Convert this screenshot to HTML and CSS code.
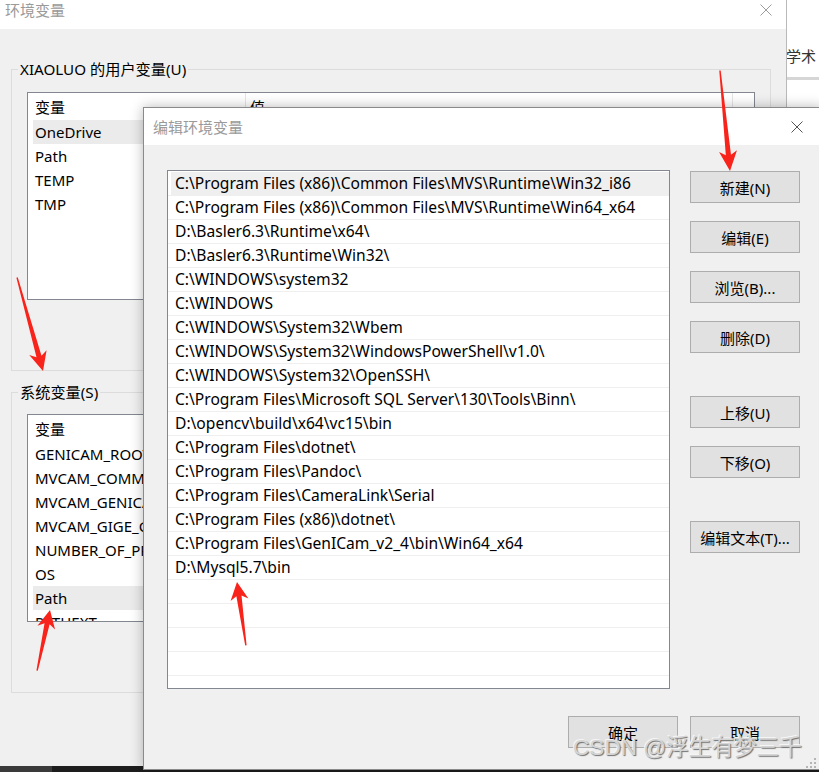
FILE: index.html
```html
<!DOCTYPE html>
<html lang="zh-CN">
<head>
<meta charset="utf-8">
<title>编辑环境变量</title>
<link rel="stylesheet" href="styles.css">
</head>
<body>
<div class="desktop">
  <div class="bgwin">
    <div class="titlebar bg-title">
      <span class="title">环境变量</span>
      <svg class="close" width="12" height="12" viewBox="0 0 12 12"><path d="M0.5 0.5L11.5 11.5M11.5 0.5L0.5 11.5"/></svg>
    </div>
    <div class="bgbody">
      <fieldset class="group">
        <legend>XIAOLUO 的用户变量(U)</legend>
        <div class="listview">
          <div class="lv-head"><span class="col c1">变量</span><span class="col c2">值</span><span class="col c3"></span></div>
          <div class="lv-row sel">OneDrive</div>
          <div class="lv-row">Path</div>
          <div class="lv-row">TEMP</div>
          <div class="lv-row">TMP</div>
        </div>
      </fieldset>
      <fieldset class="group group-sys">
        <legend>系统变量(S)</legend>
        <div class="listview list-sys">
          <div class="lv-head"><span class="col c1">变量</span><span class="col c2">值</span><span class="col c3"></span></div>
          <div class="lv-row">GENICAM_ROOT_V2_4</div>
          <div class="lv-row">MVCAM_COMMON_RUNENV</div>
          <div class="lv-row">MVCAM_GENICAM_CLPROTOCOL</div>
          <div class="lv-row">MVCAM_GIGE_GENICAM_CLPROTOCOL</div>
          <div class="lv-row">NUMBER_OF_PROCESSORS</div>
          <div class="lv-row">OS</div>
          <div class="lv-row sel">Path</div>
          <div class="lv-row">PATHEXT</div>
        </div>
      </fieldset>
    </div>
  </div>
  <div class="sidewin">
    <div class="side-top">学术 <span class="dot">·</span></div>
    <div class="side-rule"></div>
  </div>
</div>
<div class="taskbar"></div>

<div class="dialog">
  <div class="titlebar dlg-title">
    <span class="title">编辑环境变量</span>
    <svg class="close" width="12" height="12" viewBox="0 0 12 12"><path d="M0.5 0.5L11.5 11.5M11.5 0.5L0.5 11.5"/></svg>
  </div>
  <div class="dlg-body">
    <div class="pathlist">
      <div class="prow sel">C:\Program Files (x86)\Common Files\MVS\Runtime\Win32_i86</div>
      <div class="prow">C:\Program Files (x86)\Common Files\MVS\Runtime\Win64_x64</div>
      <div class="prow">D:\Basler6.3\Runtime\x64\</div>
      <div class="prow">D:\Basler6.3\Runtime\Win32\</div>
      <div class="prow">C:\WINDOWS\system32</div>
      <div class="prow">C:\WINDOWS</div>
      <div class="prow">C:\WINDOWS\System32\Wbem</div>
      <div class="prow">C:\WINDOWS\System32\WindowsPowerShell\v1.0\</div>
      <div class="prow">C:\WINDOWS\System32\OpenSSH\</div>
      <div class="prow">C:\Program Files\Microsoft SQL Server\130\Tools\Binn\</div>
      <div class="prow">D:\opencv\build\x64\vc15\bin</div>
      <div class="prow">C:\Program Files\dotnet\</div>
      <div class="prow">C:\Program Files\Pandoc\</div>
      <div class="prow">C:\Program Files\CameraLink\Serial</div>
      <div class="prow">C:\Program Files (x86)\dotnet\</div>
      <div class="prow">C:\Program Files\GenICam_v2_4\bin\Win64_x64</div>
      <div class="prow">D:\Mysql5.7\bin</div>
      <div class="prow"></div>
      <div class="prow"></div>
      <div class="prow"></div>
      <div class="prow"></div>
      <div class="prow"></div>
    </div>
    <div class="btncol">
      <button class="btn">新建(N)</button>
      <button class="btn">编辑(E)</button>
      <button class="btn">浏览(B)...</button>
      <button class="btn">删除(D)</button>
      <button class="btn btn-sep">上移(U)</button>
      <button class="btn">下移(O)</button>
      <button class="btn btn-sep">编辑文本(T)...</button>
    </div>
    <div class="btnrow">
      <button class="btn">确定</button>
      <button class="btn">取消</button>
    </div>
  </div>
</div>

<svg class="grip" width="14" height="14" viewBox="0 0 14 14">
  <rect x="10" y="2" width="2" height="2"/><rect x="6" y="6" width="2" height="2"/><rect x="10" y="6" width="2" height="2"/>
  <rect x="2" y="10" width="2" height="2"/><rect x="6" y="10" width="2" height="2"/><rect x="10" y="10" width="2" height="2"/>
</svg>

<div class="watermark">CSDN @浮生有梦三千</div>

<svg class="arrows" width="819" height="772" viewBox="0 0 819 772">
  <polygon points="0,0 9,20 2.6,16 0.7,101 -0.7,101 -2.6,16 -9,20" transform="translate(730 171) rotate(174.3)"/>
  <polygon points="0,0 9,19 2.6,15 0.7,97 -0.7,97 -2.6,15 -9,19" transform="translate(43 371) rotate(164.5)"/>
  <polygon points="0,0 9,18 2.6,14 0.7,62 -0.7,62 -2.6,14 -9,18" transform="translate(50 610) rotate(12)"/>
  <polygon points="0,0 9,18 2.6,14 0.7,64 -0.7,64 -2.6,14 -9,18" transform="translate(237 582) rotate(-8)"/>
</svg>
</body>
</html>
```

FILE: styles.css
```css
* { box-sizing: border-box; }
html, body { margin: 0; padding: 0; }
body {
  width: 819px;
  height: 772px;
  overflow: hidden;
  position: relative;
  background: #f0f0f0;
  color: #000;
  font-family: "Noto Sans", "Noto Sans CJK SC", sans-serif;
  font-size: 15px;
}

.desktop { display: flex; height: 766px; }

.bgwin {
  width: 787px;
  flex: none;
  display: flex;
  flex-direction: column;
  background: #f0f0f0;
  border-right: 1px solid #b9b9b9;
}

.titlebar { background: #fff; display: flex; }
.titlebar .title { color: #9a9a9a; line-height: 20px; }
.close { fill: none; stroke-width: 1; }

.bg-title { height: 29px; padding: 0 14px 0 5px; justify-content: space-between; align-items: flex-start; }
.bg-title .close { margin-top: 4px; stroke: #9c9c9c; }

.bgbody { flex: 1; }

.group {
  margin: 30px 15px 0 11px;
  padding: 0 15px 70px;
  border: 1px solid #dcdcdc;
  min-width: 0;
}
.group legend { margin-left: -9px; padding: 0 2px; line-height: 20px; font-size: 15.2px; }
.group-sys { margin-top: 11px; }

.listview {
  margin-top: 13px;
  height: 208px;
  background: #fff;
  border: 1px solid #828790;
  overflow: hidden;
}
.list-sys { margin-top: 12px; }

.lv-head { display: flex; height: 27px; }
.lv-head .col { display: flex; align-items: center; border-right: 1px solid #e5e5e5; }
.lv-head .c1 { width: 218px; padding-left: 7px; }
.lv-head .c2 { width: 487px; padding-left: 4px; }
.lv-head .c3 { flex: 1; border-right: none; }

.lv-row { height: 24px; line-height: 24px; margin-left: 5px; padding-left: 2px; white-space: nowrap; }
.lv-row.sel { background: #ebebeb; }

.sidewin { flex: 1; background: #fff; display: flex; flex-direction: column; overflow: hidden; }
.side-top { height: 77px; padding-top: 46px; line-height: 20px; color: #333; margin-left: -1px; white-space: nowrap; }
.side-top .dot { color: #e08a2c; }
.side-rule { height: 3px; background: #d6d6d6; }

.taskbar { height: 6px; background: linear-gradient(to right, #3a3a3a 0 52px, #1d1d1d 52px); }

.dialog {
  position: absolute;
  left: 143px;
  top: 107px;
  width: 680px;
  height: 663px;
  background: #f0f0f0;
  border: 1px solid #8a8a8a;
  box-shadow: 0 0 12px rgba(0, 0, 0, 0.28);
  display: flex;
  flex-direction: column;
}
.dlg-title { height: 37px; flex: none; padding: 0 19px 0 9px; justify-content: space-between; align-items: center; }
.dlg-title .close { stroke: #555; }

.dlg-body {
  flex: 1;
  padding: 25px 0 0 23px;
  display: grid;
  grid-template-columns: 503px 110px;
  grid-template-rows: 519px auto;
  column-gap: 20px;
  row-gap: 27px;
  align-content: start;
}

.pathlist {
  background: #fff;
  border: 1px solid #828790;
  padding-top: 1px;
  overflow: hidden;
  font-size: 15.6px;
}
.prow {
  height: 24px;
  line-height: 23px;
  padding-left: 7px;
  border-bottom: 1px solid #efefef;
  white-space: nowrap;
}
.prow.sel { background: #efefef; box-shadow: inset 3px 0 0 #fff; }

.btncol { display: flex; flex-direction: column; gap: 18px; padding-top: 1px; }
.btn-sep { margin-top: 25px; }

.btn {
  width: 110px;
  height: 32px;
  padding: 0;
  background: #e1e1e1;
  border: 1px solid #adadad;
  font-family: inherit;
  font-size: 15px;
  color: #000;
}

.btnrow { grid-column: 1 / 3; justify-self: end; display: flex; gap: 12px; }

.grip { position: absolute; left: 804px; top: 756px; fill: #b5b5b5; }

.watermark {
  position: absolute;
  left: 573px;
  top: 733px;
  font-family: "Liberation Sans", "Noto Sans CJK SC", sans-serif;
  font-size: 22.6px;
  line-height: 30px;
  color: #d4d4d4;
  text-shadow: 1px 1px 1px #6f6f6f, -1px -1px 0 #f5f5f5;
  white-space: nowrap;
}

.arrows { position: absolute; left: 0; top: 0; pointer-events: none; }
.arrows polygon { fill: #f8241b; }
```
